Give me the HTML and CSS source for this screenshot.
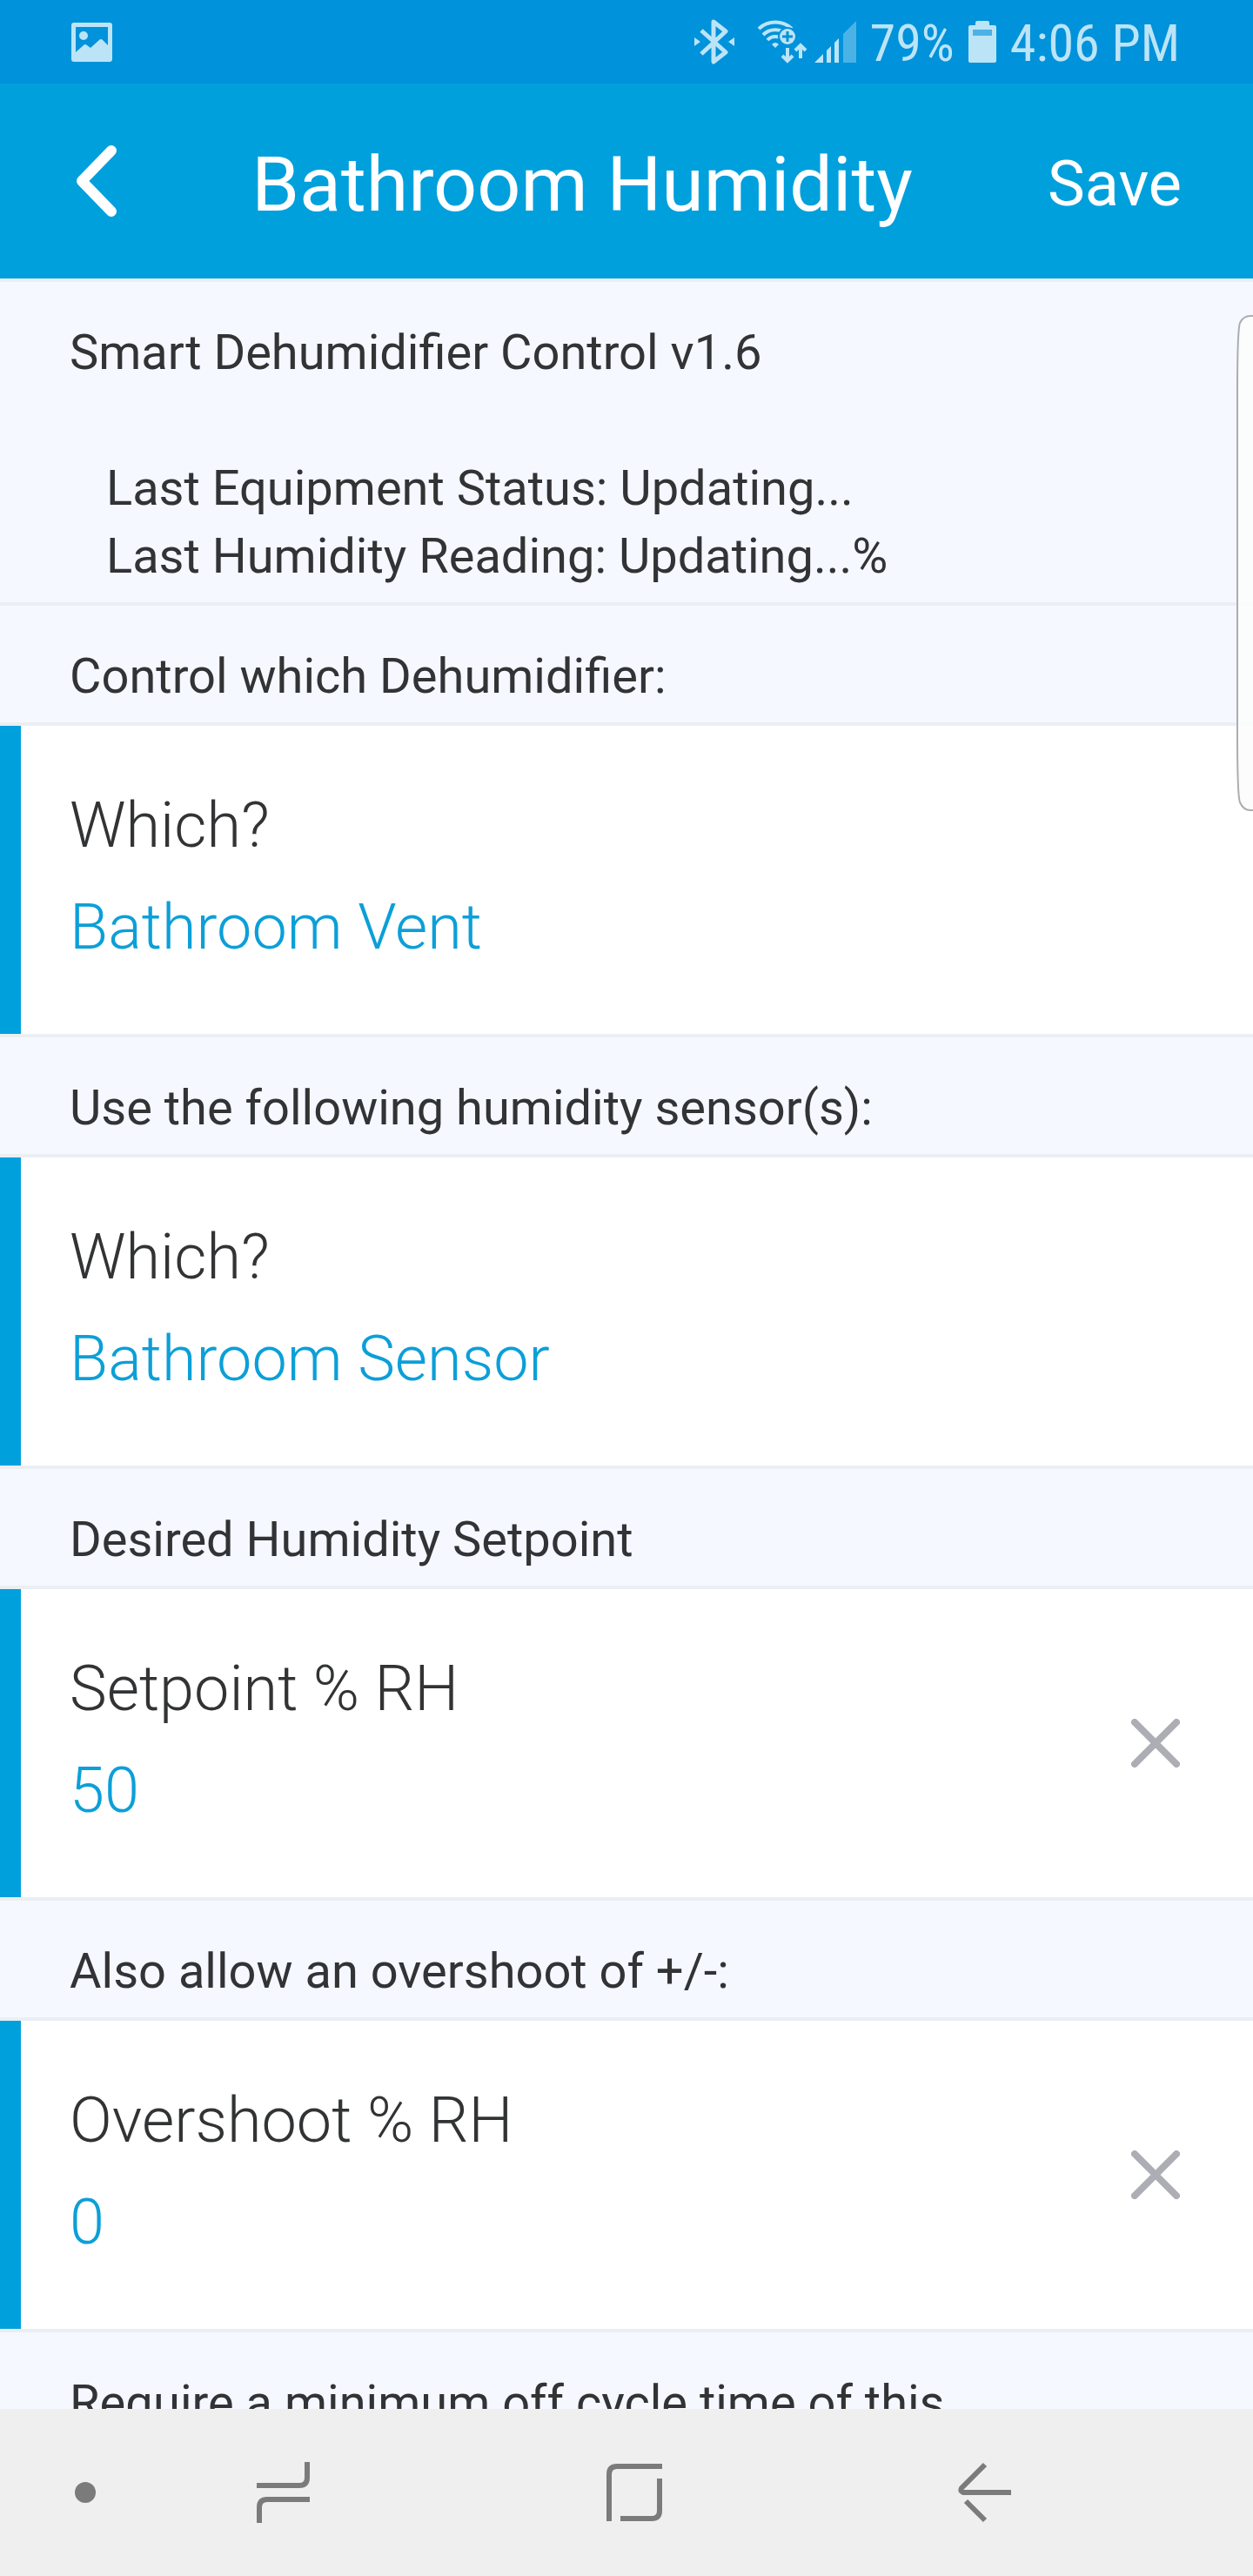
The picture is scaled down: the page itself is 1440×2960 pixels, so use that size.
FILE: index.html
```
<!DOCTYPE html>
<html lang="en">
<head>
    <meta charset="UTF-8">
    <meta name="viewport" content="width=device-width, initial-scale=1.0">
    <title>Bathroom Humidity</title>
    <link rel="stylesheet" href="styles.css">
</head>
<body>

<div class="status-bar">
    <svg width="47" height="45" viewBox="0 0 47 45">
        <path fill="currentColor" fill-rule="evenodd" d="M3 0H44Q47 0 47 3V42Q47 45 44 45H3Q0 45 0 42V3Q0 0 3 0ZM5 5V34L14 26Q16 24 18 26L22 29L32 20Q34 18 36 20L42 26V5Z"/>
        <circle cx="14" cy="15" r="5" fill="currentColor"/>
    </svg>
    <div class="status-icons">
        <svg class="bluetooth" width="46" height="52" viewBox="0 0 46 52">
            <path fill="none" stroke="currentColor" stroke-width="5" stroke-linejoin="round" d="M8 13L36 38L22 49V3L36 14L8 40"/>
            <path fill="currentColor" d="M0 21L7 26L0 31ZM46 21L39 26L46 31Z"/>
        </svg>
        <svg class="wifi" width="58" height="52" viewBox="0 0 58 52">
            <g fill="none" stroke="currentColor" stroke-width="4">
                <path d="M2 11A28 28 0 0 1 40 11"/>
                <path d="M7 18A20 20 0 0 1 35 18"/>
                <path d="M12 24A12 12 0 0 1 30 24"/>
            </g>
            <path fill="currentColor" d="M21 33L17 29Q21 25 25 29Z"/>
            <circle class="badge-gap" cx="35" cy="20" r="11"/>
            <circle cx="35" cy="20" r="9" fill="currentColor"/>
            <path class="badge-plus" d="M35 14V26M29 20H41"/>
            <path fill="none" stroke="currentColor" stroke-width="4" d="M35 33V47M29 42L35 48L41 42M50 45V31M44 36L50 30L56 36"/>
        </svg>
        <svg class="signal" width="48" height="48" viewBox="0 0 48 48">
            <path fill="currentColor" d="M0 48L10 38V48ZM14 34L19 29V48H14ZM23 25L28 20V48H23Z"/>
            <path fill="currentColor" opacity="0.4" d="M33 15L48 0V48H33Z"/>
        </svg>
        <span class="status-text">79%</span>
        <svg class="battery" width="32" height="48" viewBox="0 0 32 48">
            <path fill="currentColor" fill-rule="evenodd" d="M10 0H22Q24 0 24 2V5H30Q32 5 32 7V46Q32 48 30 48H2Q0 48 0 46V7Q0 5 2 5H8V2Q8 0 10 0ZM5 10V17H27V10Z"/>
            <path fill="currentColor" opacity="0.4" d="M5 10H27V17H5Z"/>
        </svg>
        <span class="status-text">4:06 PM</span>
    </div>
</div>

<header class="app-bar">
    <button type="button" class="back" aria-label="Back">
        <svg width="46" height="90" viewBox="0 0 46 90">
            <path fill="none" stroke="currentColor" stroke-width="12" stroke-linecap="round" stroke-linejoin="round" d="M40 6L6 41L40 76"/>
        </svg>
    </button>
    <h1>Bathroom Humidity</h1>
    <button type="button" class="save">Save</button>
</header>

<main class="settings">
    <div class="note intro">
        <p>Smart Dehumidifier Control v1.6</p>
        <p class="reading">Last Equipment Status: Updating...</p>
        <p class="reading">Last Humidity Reading: Updating...%</p>
    </div>

    <h2 class="note">Control which Dehumidifier:</h2>
    <div class="row">
        <div class="field">
            <label for="dehumidifier">Which?</label>
            <button type="button" class="value" id="dehumidifier">Bathroom Vent</button>
        </div>
    </div>

    <h2 class="note">Use the following humidity sensor(s):</h2>
    <div class="row">
        <div class="field">
            <label for="sensor">Which?</label>
            <button type="button" class="value" id="sensor">Bathroom Sensor</button>
        </div>
    </div>

    <h2 class="note">Desired Humidity Setpoint</h2>
    <div class="row">
        <div class="field">
            <label for="setpoint">Setpoint % RH</label>
            <input type="text" inputmode="numeric" class="value" id="setpoint" value="50">
        </div>
        <button type="button" class="clear" aria-label="Clear setpoint">
            <svg width="56" height="56" viewBox="0 0 56 56">
                <path stroke="currentColor" stroke-width="8" stroke-linecap="round" d="M4 4L52 52M52 4L4 52"/>
            </svg>
        </button>
    </div>

    <h2 class="note">Also allow an overshoot of +/-:</h2>
    <div class="row">
        <div class="field">
            <label for="overshoot">Overshoot % RH</label>
            <input type="text" inputmode="numeric" class="value" id="overshoot" value="0">
        </div>
        <button type="button" class="clear" aria-label="Clear overshoot">
            <svg width="56" height="56" viewBox="0 0 56 56">
                <path stroke="currentColor" stroke-width="8" stroke-linecap="round" d="M4 4L52 52M52 4L4 52"/>
            </svg>
        </button>
    </div>

    <h2 class="note">Require a minimum off cycle time of this</h2>
</main>

<!-- edge panel handle, floats over the list -->
<svg class="edge-panel" width="19" height="570" viewBox="0 0 19 570">
    <path d="M21 1H16Q8 1 4 9Q1 18 1 90V480Q1 552 4 560Q8 569 16 569H21Z"/>
</svg>

<nav class="nav-bar">
    <button type="button" class="dot" aria-label="Hide navigation bar">
        <svg width="24" height="24" viewBox="0 0 24 24">
            <circle cx="12" cy="12" r="12" fill="currentColor"/>
        </svg>
    </button>
    <button type="button" aria-label="Recent apps">
        <svg width="62" height="70" viewBox="0 0 62 70">
            <path fill="none" stroke="currentColor" stroke-width="6" d="M0 27H49Q58 27 58 18V0M3 70V52Q3 43 12 43H61"/>
        </svg>
    </button>
    <button type="button" aria-label="Home">
        <svg width="64" height="66" viewBox="0 0 64 66">
            <path fill="none" stroke="currentColor" stroke-width="6" d="M3 66V12Q3 3 12 3H64M61 17V54Q61 63 52 63H16"/>
        </svg>
    </button>
    <button type="button" aria-label="Back">
        <svg width="62" height="70" viewBox="0 0 62 70">
            <path fill="none" stroke="currentColor" stroke-width="6" d="M31 3L4 30Q2 34 6 35H61M9 45L31 67"/>
        </svg>
    </button>
</nav>

</body>
</html>
```
FILE: styles.css
```
* {
    box-sizing: border-box;
}
body {
    display: flex;
    flex-direction: column;
    height: 100vh;
    margin: 0;
    position: relative;
    font-family: Roboto, "Liberation Sans", sans-serif;
    color: #313335;
    background-color: #f5f8ff;
}
button, input {
    margin: 0;
    padding: 0;
    border: none;
    background: none;
    font: inherit;
    color: inherit;
    text-align: left;
}
button {
    cursor: pointer;
}
svg {
    display: block;
    flex-shrink: 0;
}
h1, h2, p {
    margin: 0;
    font-weight: 400;
}

/* status bar */
.status-bar {
    display: flex;
    flex-shrink: 0;
    align-items: center;
    justify-content: space-between;
    height: 96px;
    padding: 0 84px 0 82px;
    background-color: #0092da;
    color: #bce4f7;
    font-family: "Roboto Condensed", Roboto, "Liberation Sans", sans-serif;
    font-size: 60px;
    line-height: 64px;
}
.status-icons {
    display: flex;
    align-items: center;
    gap: 16px;
}
.status-text {
    padding-top: 4px;
}
.bluetooth {
    margin-right: 10px;
}
.signal {
    margin-left: -8px;
}
.badge-gap {
    fill: #0092da;
}
.badge-plus {
    stroke: #0092da;
    stroke-width: 3;
}

/* app bar */
.app-bar {
    display: flex;
    flex-shrink: 0;
    align-items: center;
    justify-content: space-between;
    height: 224px;
    padding: 8px 82px 0 88px;
    background-color: #00a0dd;
    color: #fff;
}
.app-bar h1 {
    font-size: 88px;
    line-height: 104px;
}
.save {
    font-size: 72px;
    line-height: 84px;
}

/* settings list */
.settings {
    flex: 1;
    min-height: 0;
    overflow-y: auto;
    scrollbar-width: none;
    border-top: 4px solid #ebeef2;
}
.note {
    padding: 42px 80px 14px;
    border-bottom: 4px solid #ebeef2;
    font-size: 56px;
    line-height: 78px;
}
.row + .note {
    border-top: 4px solid #ebeef2;
}
.intro p:first-child {
    margin-bottom: 78px;
}
.reading {
    padding-left: 42px;
}
.row {
    display: flex;
    align-items: center;
    padding: 73px 84px 80px 56px;
    border-left: 24px solid #00a0dd;
    background-color: #fff;
    font-size: 72px;
    font-weight: 300;
    line-height: 84px;
}
.field {
    display: flex;
    flex: 1;
    flex-direction: column;
    gap: 33px;
    min-width: 0;
}
.value {
    width: 100%;
    height: 84px;
    color: #0c9fd8;
}
.clear {
    margin-top: 7px;
    color: #adaeb4;
}

/* edge panel */
.edge-panel {
    position: absolute;
    top: 362px;
    right: 0;
    fill: rgba(252, 252, 252, 0.9);
    stroke: #acadb0;
    stroke-width: 2;
}

/* navigation bar */
.nav-bar {
    display: grid;
    flex-shrink: 0;
    grid-template-columns: 124px 1fr 1fr 1fr;
    place-items: center;
    height: 192px;
    padding-right: 106px;
    background-color: #efefef;
    color: #7b7b7b;
}
.dot {
    justify-self: end;
    margin-right: 14px;
}
```
